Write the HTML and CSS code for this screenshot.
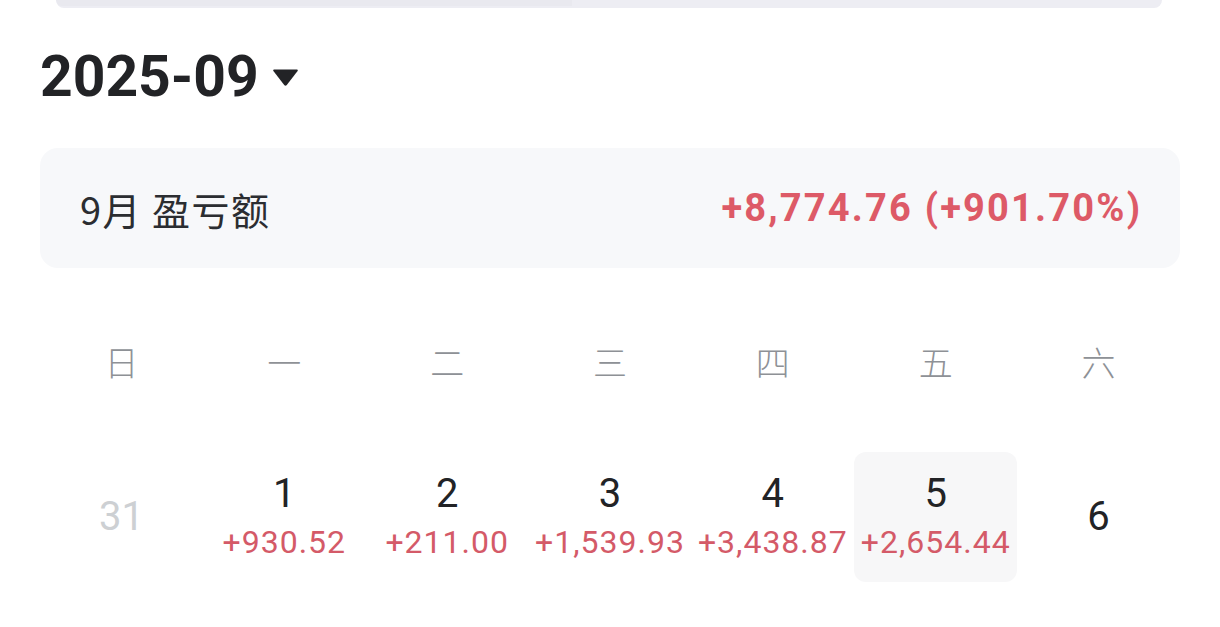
FILE: index.html
```html
<!DOCTYPE html>
<html lang="zh-CN">
<head>
<meta charset="utf-8">
<link rel="stylesheet" href="styles.css">
</head>
<body>
<div class="page">
  <div class="topbar"><div class="seg seg-left"></div><div class="seg seg-right"></div></div>
  <div class="month">
    <span class="month-text">2025-09</span>
    <svg class="caret" width="27" height="19" viewBox="0 0 27 19"><path d="M2 1.5 H25 Q26.5 1.5 25.6 3 L14.8 17 Q13.5 18.5 12.2 17 L1.4 3 Q0.5 1.5 2 1.5 Z" fill="#222326"/></svg>
  </div>
  <div class="summary">
    <span class="summary-label">9月 盈亏额</span>
    <span class="summary-value">+8,774.76 (+901.70%)</span>
  </div>
  <div class="weekdays">
    <div class="wd">日</div><div class="wd">一</div><div class="wd">二</div><div class="wd">三</div><div class="wd">四</div><div class="wd">五</div><div class="wd">六</div>
  </div>
  <div class="days">
    <div class="day"><span class="num muted">31</span></div>
    <div class="day"><span class="num">1</span><span class="val">+930.52</span></div>
    <div class="day"><span class="num">2</span><span class="val">+211.00</span></div>
    <div class="day"><span class="num">3</span><span class="val">+1,539.93</span></div>
    <div class="day"><span class="num">4</span><span class="val">+3,438.87</span></div>
    <div class="day active"><span class="num">5</span><span class="val">+2,654.44</span></div>
    <div class="day"><span class="num">6</span></div>
  </div>
</div>
</body>
</html>
```

FILE: styles.css
```css
* { box-sizing: border-box; }
html, body { margin: 0; padding: 0; background: #ffffff; }
body { font-family: Roboto, "Noto Sans CJK SC", sans-serif; color: #222326; width: 1220px; height: 627px; overflow: hidden; }
.page { padding: 0 40px; }
.topbar { display: flex; height: 8px; margin: 0 18px 0 16px; background: #ededf3; border-radius: 0 0 40px 40px; overflow: hidden; }
.seg { height: 6px; }
.seg-left { width: 516px; background: #e9e9ef; border-radius: 0 0 0 30px; }
.seg-right { flex: 1; }
.month { display: flex; align-items: center; gap: 13px; height: 140px; padding-bottom: 3px; }
.month-text { font-size: 57px; font-weight: 700; line-height: 1; }
.caret { margin-top: 2px; }
.summary { display: flex; justify-content: space-between; align-items: center; height: 120px; background: #f7f8fa; border-radius: 18px; padding: 0 40px; }
.summary-label { font-family: "Noto Sans CJK SC", sans-serif; font-size: 38px; letter-spacing: 1.5px; color: #2b2d31; }
.summary-value { font-size: 38px; font-weight: 700; color: #dd5a67; letter-spacing: 2.2px; margin-right: -2.2px; }
.weekdays { display: grid; grid-template-columns: repeat(7, 1fr); margin-top: 48px; height: 90px; align-items: center; }
.wd { text-align: center; font-family: "Noto Sans CJK SC", sans-serif; font-size: 34px; font-weight: 300; color: #8e9196; }
.days { display: grid; grid-template-columns: repeat(7, 1fr); margin-top: 46px; }
.day { height: 130px; display: flex; flex-direction: column; align-items: center; justify-content: center; border-radius: 12px; }
.day.active { background: #f7f7f8; }
.num { font-size: 40px; line-height: 50px; color: #222326; }
.num.muted { color: #cdd0d3; }
.val { font-size: 32px; line-height: 46px; letter-spacing: 1px; color: #d45a68; }
```
